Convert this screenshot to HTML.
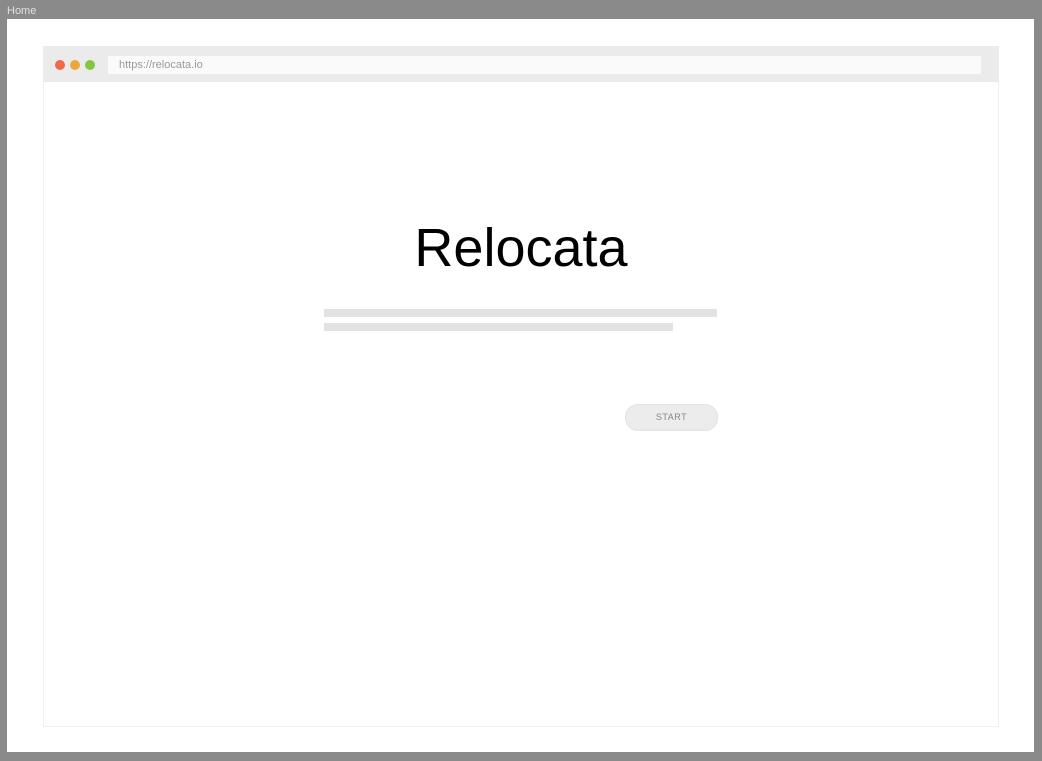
<!DOCTYPE html><html><head><style>
body{margin:0;width:1042px;height:761px;background:#8a8a8a;position:relative;overflow:hidden;font-family:"Liberation Sans",sans-serif}
.a{position:absolute}
</style></head><body>
<div class="a" style="left:7px;top:5px;font-size:11px;color:#e0e0e0">Home</div>
<div class="a" style="left:7px;top:19px;width:1027px;height:733px;background:#fff"></div>
<div class="a" style="left:43px;top:46px;width:954px;height:679px;border:1px solid #f0f0f0;background:#fff"></div>
<div class="a" style="left:43px;top:46px;width:956px;height:36px;background:#ebebeb"></div>
<div class="a" style="left:55px;top:60px;width:10px;height:10px;border-radius:50%;background:#ee6a4a"></div>
<div class="a" style="left:70px;top:60px;width:10px;height:10px;border-radius:50%;background:#e9a93a"></div>
<div class="a" style="left:85px;top:60px;width:10px;height:10px;border-radius:50%;background:#85c543"></div>
<div class="a" style="left:108px;top:56px;width:873px;height:18px;background:#fafafa"></div>
<div class="a" style="left:119px;top:58px;font-size:11px;color:#9a9a9a;line-height:14px">https://relocata.io</div>
<div class="a" style="left:0;width:1042px;top:217px;text-align:center;font-size:54px;color:#000;line-height:62px">Relocata</div>
<div class="a" style="left:324px;top:309px;width:393px;height:8px;background:#e2e2e2"></div>
<div class="a" style="left:324px;top:323px;width:349px;height:8px;background:#e2e2e2"></div>
<div class="a" style="left:625px;top:404px;width:91px;height:25px;border:1px solid #e2e2e2;border-radius:13px;background:#ececec;text-align:center;line-height:25px;font-size:9px;color:#888;letter-spacing:.5px">START</div>
</body></html>
